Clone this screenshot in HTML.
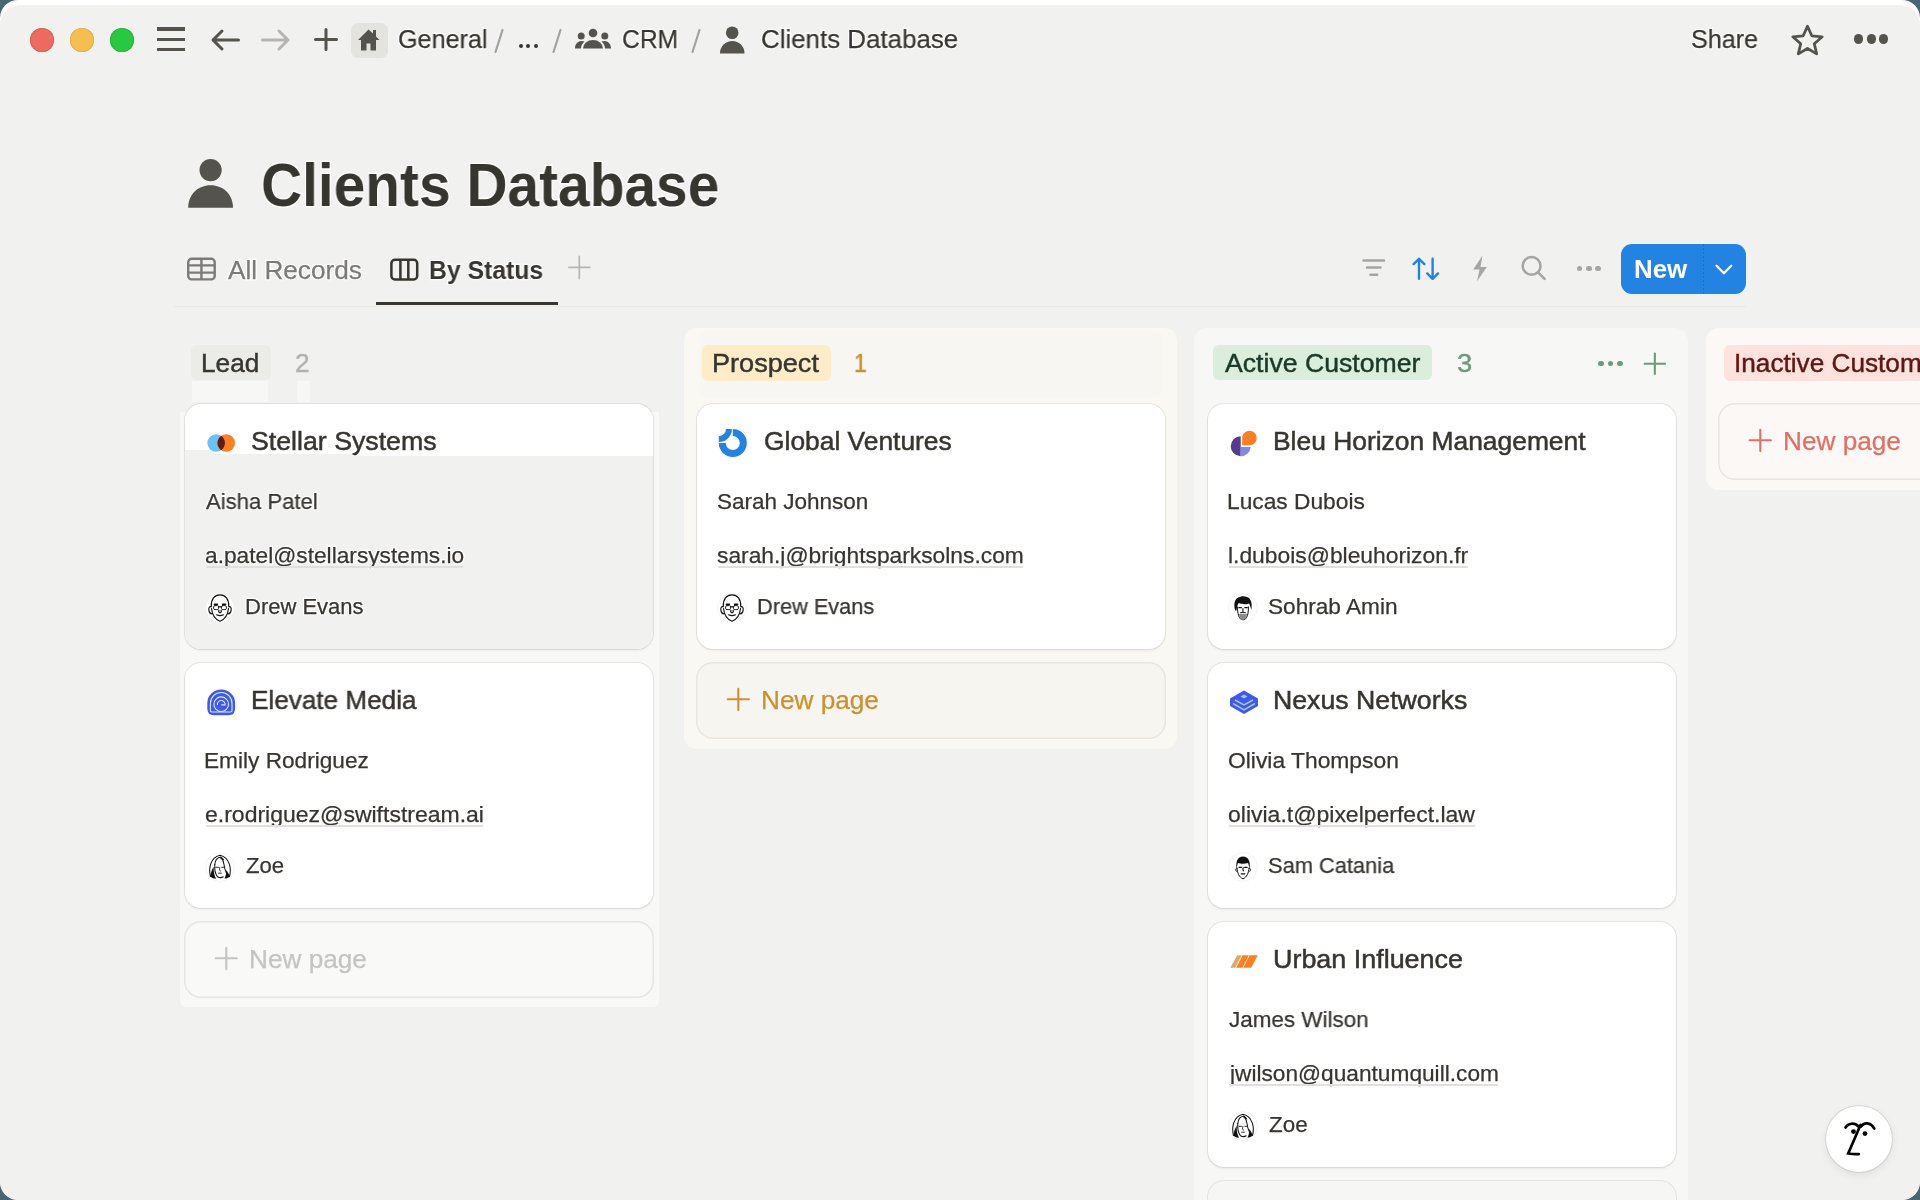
<!DOCTYPE html><html><head><meta charset="utf-8"><style>
html,body{margin:0;padding:0;}
body{width:1920px;height:1200px;position:relative;overflow:hidden;background:#4b6670;font-family:"Liberation Sans",sans-serif;}
.t{position:absolute;white-space:nowrap;line-height:1;transform-origin:0 0;will-change:transform;}
.r{position:absolute;}
</style></head><body>
<div class="r" style="left:0px;top:0px;width:1920px;height:1200px;background:#ffffff;border-radius:18px;"></div>
<div class="r" style="left:0px;top:5px;width:1920px;height:1195px;background:#f1f1ef;border-radius:20px 20px 20px 20px;"></div>
<div class="r" style="left:30px;top:28px;width:24px;height:24px;background:#ed6a5e;border-radius:50%;box-shadow:inset 0 0 0 0.6px #d0574b;"></div>
<div class="r" style="left:70px;top:28px;width:24px;height:24px;background:#f5bf4f;border-radius:50%;box-shadow:inset 0 0 0 0.6px #d8a13a;"></div>
<div class="r" style="left:110px;top:28px;width:24px;height:24px;background:#28c840;border-radius:50%;box-shadow:inset 0 0 0 0.6px #1fa934;"></div>
<div class="r" style="left:157px;top:27.4px;width:28px;height:3.2px;background:#55534e;"></div>
<div class="r" style="left:157px;top:37.8px;width:28px;height:3.2px;background:#55534e;"></div>
<div class="r" style="left:157px;top:47.9px;width:28px;height:3.2px;background:#55534e;"></div>
<svg class="r" style="left:208px;top:26px" width="34" height="28" viewBox="0 0 34 28"><path d="M30.5 14H5.5M14 5L5 14l9 9" fill="none" stroke="#55534e" stroke-width="3" stroke-linecap="round" stroke-linejoin="round"/></svg>
<svg class="r" style="left:259px;top:26px" width="34" height="28" viewBox="0 0 34 28"><path d="M3.5 14H28.5M20 5l9 9-9 9" fill="none" stroke="#b5b4b0" stroke-width="3" stroke-linecap="round" stroke-linejoin="round"/></svg>
<svg class="r" style="left:311px;top:25px" width="30" height="30" viewBox="0 0 30 30"><path d="M15 4.5V24.5M4.5 14.5H25.5" fill="none" stroke="#55534e" stroke-width="3" stroke-linecap="round"/></svg>
<div class="r" style="left:351px;top:22.5px;width:36.5px;height:35.5px;background:#e3e3e0;border-radius:7px;"></div>
<svg class="r" style="left:357px;top:28px" width="24" height="24" viewBox="0 0 24 24"><path d="M11.5 1.5L1 12h3v10.5h5.5v-7h4v7H19V12h3.5L19 8.5V2h-3v3.5z" fill="#55534e"/></svg>
<div class="t" style="left:397.94px;top:26.30px;font-size:26.20px;color:#fff;transform:scaleX(0.9615);-webkit-text-stroke:2.6px #fff;">General</div>
<div class="t" style="left:397.94px;top:26.30px;font-size:26.20px;color:#37352f;transform:scaleX(0.9615);-webkit-text-stroke:0.25px #37352f;">General</div>
<svg class="r" style="left:493px;top:28px" width="12" height="26" viewBox="0 0 12 26"><path d="M9.5 2L2.5 24" stroke="#a3a29e" stroke-width="2.2" stroke-linecap="round"/></svg>
<div class="r" style="left:518.5px;top:44.1px;width:4.2px;height:4.2px;background:#37352f;border-radius:50%;"></div>
<div class="r" style="left:526.1px;top:44.1px;width:4.2px;height:4.2px;background:#37352f;border-radius:50%;"></div>
<div class="r" style="left:533.5px;top:44.1px;width:4.2px;height:4.2px;background:#37352f;border-radius:50%;"></div>
<svg class="r" style="left:551px;top:28px" width="12" height="26" viewBox="0 0 12 26"><path d="M9.5 2L2.5 24" stroke="#a3a29e" stroke-width="2.2" stroke-linecap="round"/></svg>
<svg class="r" style="left:574px;top:28px" width="38" height="22" viewBox="0 0 38 22"><g fill="#55534e"><circle cx="19" cy="5" r="4.3"/><circle cx="7.2" cy="8" r="3.5"/><circle cx="30.8" cy="8" r="3.5"/><path d="M9 20.5a10 8.5 0 0 1 20 0z"/><path d="M1 20.5c0-4 2-7 6.5-7.5 1.3 0 2.3.2 3 .6-2 1.8-3.3 4-3.6 6.9z"/><path d="M37 20.5c0-4-2-7-6.5-7.5-1.3 0-2.3.2-3 .6 2 1.8 3.3 4 3.6 6.9z"/></g></svg>
<div class="t" style="left:621.66px;top:26.30px;font-size:26.20px;color:#fff;transform:scaleX(0.9412);-webkit-text-stroke:2.6px #fff;">CRM</div>
<div class="t" style="left:621.66px;top:26.30px;font-size:26.20px;color:#37352f;transform:scaleX(0.9412);-webkit-text-stroke:0.25px #37352f;">CRM</div>
<svg class="r" style="left:690px;top:28px" width="12" height="26" viewBox="0 0 12 26"><path d="M9.5 2L2.5 24" stroke="#a3a29e" stroke-width="2.2" stroke-linecap="round"/></svg>
<svg class="r" style="left:719px;top:25px" width="27" height="30" viewBox="0 0 27 30"><g fill="#55534e"><circle cx="13.2" cy="7.7" r="6.3"/><path d="M1 28.5a12.2 12.5 0 0 1 24.5 0z"/></g></svg>
<div class="t" style="left:760.61px;top:26.30px;font-size:26.20px;color:#fff;transform:scaleX(0.9888);-webkit-text-stroke:2.6px #fff;">Clients Database</div>
<div class="t" style="left:760.61px;top:26.30px;font-size:26.20px;color:#37352f;transform:scaleX(0.9888);-webkit-text-stroke:0.25px #37352f;">Clients Database</div>
<div class="t" style="left:1691.04px;top:26.30px;font-size:26.20px;color:#fff;transform:scaleX(0.9603);-webkit-text-stroke:2.6px #fff;">Share</div>
<div class="t" style="left:1691.04px;top:26.30px;font-size:26.20px;color:#37352f;transform:scaleX(0.9603);-webkit-text-stroke:0.25px #37352f;">Share</div>
<svg class="r" style="left:1789px;top:22px" width="37" height="36" viewBox="0 0 37 36"><path d="M18.5 4.2l4.3 9.6 10.4 1-7.9 6.9 2.4 10.2-9.2-5.4-9.2 5.4 2.4-10.2-7.9-6.9 10.4-1z" fill="none" stroke="#55534e" stroke-width="2.8" stroke-linejoin="round"/></svg>
<div class="r" style="left:1854.2px;top:34.4px;width:9.2px;height:9.2px;background:#55534e;border-radius:50%;"></div>
<div class="r" style="left:1866.5px;top:34.4px;width:9.2px;height:9.2px;background:#55534e;border-radius:50%;"></div>
<div class="r" style="left:1879.0px;top:34.4px;width:9.2px;height:9.2px;background:#55534e;border-radius:50%;"></div>
<svg class="r" style="left:184px;top:155px" width="52" height="56" viewBox="0 0 52 56"><g fill="#55534e"><circle cx="26.6" cy="15.1" r="11.1"/><path d="M4.2 52.8C4.2 39.5 14 30.3 26.6 30.3S49 39.5 49 52.8z"/></g></svg>
<div class="t" style="left:261.16px;top:154.00px;font-size:61.80px;color:#fff;font-weight:700;transform:scaleX(0.9202);-webkit-text-stroke:2.6px #fff;">Clients Database</div>
<div class="t" style="left:261.16px;top:154.00px;font-size:61.80px;color:#37352f;font-weight:700;transform:scaleX(0.9202);">Clients Database</div>
<svg class="r" style="left:186px;top:257px" width="31" height="25" viewBox="0 0 31 25"><g fill="none" stroke="#7d7b77" stroke-width="2.4"><rect x="2.2" y="1.8" width="26.5" height="20.6" rx="3.5"/><path d="M15.4 2v20.4M2.2 8.4h26.5M2.2 15.6h26.5"/></g></svg>
<div class="t" style="left:227.70px;top:257.30px;font-size:26.20px;color:#fff;-webkit-text-stroke:2.6px #fff;">All Records</div>
<div class="t" style="left:227.70px;top:257.30px;font-size:26.20px;color:#7d7b77;-webkit-text-stroke:0.25px #7d7b77;">All Records</div>
<svg class="r" style="left:389px;top:258px" width="31" height="24" viewBox="0 0 31 24"><g fill="none" stroke="#37352f" stroke-width="2.5"><rect x="2.4" y="1.8" width="25.8" height="19.6" rx="3.5"/><path d="M11.4 2v19.4M19.3 2v19.4"/></g></svg>
<div class="t" style="left:429.11px;top:257.30px;font-size:26.20px;color:#fff;font-weight:700;transform:scaleX(0.9449);-webkit-text-stroke:2.6px #fff;">By Status</div>
<div class="t" style="left:429.11px;top:257.30px;font-size:26.20px;color:#37352f;font-weight:700;transform:scaleX(0.9449);">By Status</div>
<div class="r" style="left:376px;top:302.3px;width:182px;height:2.8px;background:#37352f;"></div>
<svg class="r" style="left:566px;top:254px" width="26" height="27" viewBox="0 0 26 27"><path d="M13.3 2.4v22M2.9 13.4h20.8" stroke="#b7b6b2" stroke-width="1.7" stroke-linecap="round"/></svg>
<div class="r" style="left:174px;top:305.5px;width:1572px;height:1.2px;background:#e9e8e5;"></div>
<svg class="r" style="left:1360px;top:256px" width="28" height="24" viewBox="0 0 28 24"><path d="M3.5 4.5h20.5M7 11.6h13.5M10.4 18.8h6.8" stroke="#a6a5a1" stroke-width="2.5" stroke-linecap="round"/></svg>
<svg class="r" style="left:1410px;top:255px" width="34" height="28" viewBox="0 0 34 28"><g fill="none" stroke="#2383e2" stroke-width="2.4" stroke-linecap="round" stroke-linejoin="round"><path d="M9 23.8V3.8M3.6 9.2L9 3.8l5.4 5.4"/><path d="M22.6 3.8v20M17.2 18.4l5.4 5.4 5.4-5.4"/></g></svg>
<svg class="r" style="left:1470px;top:254px" width="22" height="29" viewBox="0 0 22 29"><path d="M12.5 1.5L3.2 15.4h6.4l-2.6 11.8 9.8-14.3h-6.4z" fill="#a6a5a1"/></svg>
<svg class="r" style="left:1519px;top:253px" width="31" height="31" viewBox="0 0 31 31"><g fill="none" stroke="#a6a5a1" stroke-width="2.6" stroke-linecap="round"><circle cx="12.6" cy="12.9" r="8.9"/><path d="M19.3 19.6l6.3 6.3"/></g></svg>
<div class="r" style="left:1576.8px;top:265.9px;width:5.6px;height:5.6px;background:#a6a5a1;border-radius:50%;"></div>
<div class="r" style="left:1586.0px;top:265.9px;width:5.6px;height:5.6px;background:#a6a5a1;border-radius:50%;"></div>
<div class="r" style="left:1595.2px;top:265.9px;width:5.6px;height:5.6px;background:#a6a5a1;border-radius:50%;"></div>
<div class="r" style="left:1621px;top:244.2px;width:125px;height:49.8px;background:#2383e2;border-radius:11px;"></div>
<div class="r" style="left:1703px;top:244.2px;width:1px;height:49.8px;background:repeating-linear-gradient(#5b4aa8 0 2px,transparent 2px 4px);opacity:.7;"></div>
<div class="t" style="left:1634.34px;top:256.80px;font-size:25.20px;color:#ffffff;font-weight:700;transform:scaleX(1.0280);">New</div>
<svg class="r" style="left:1713px;top:262px" width="22" height="16" viewBox="0 0 22 16"><path d="M3.5 3.8l7.4 7.4 7.4-7.4" fill="none" stroke="#ffffff" stroke-width="2.3" stroke-linecap="round" stroke-linejoin="round"/></svg>
<div class="r" style="left:180px;top:412px;width:478.5px;height:595px;background:#f8f8f7;border-radius:0 0 6px 6px;"></div>
<div class="r" style="left:192px;top:381px;width:76px;height:21px;background:#f7f7f5;"></div>
<div class="r" style="left:297px;top:381px;width:13px;height:21px;background:#f7f7f5;"></div>
<div class="r" style="left:684px;top:328px;width:493px;height:421px;background:#faf8f3;border-radius:13px;"></div>
<div class="r" style="left:700px;top:331px;width:462px;height:66px;background:#f7f6f2;border-radius:8px;"></div>
<div class="r" style="left:1194px;top:328px;width:494px;height:900px;background:#f7f7f5;border-radius:13px;"></div>
<div class="r" style="left:1706px;top:328px;width:230px;height:162px;background:#fcf8f6;border-radius:13px;"></div>
<div class="r" style="left:190.8px;top:345.4px;width:80px;height:35px;background:#ebebe8;border-radius:6px;"></div>
<div class="t" style="left:200.91px;top:350.30px;font-size:26.20px;color:#37352f;transform:scaleX(0.9927);-webkit-text-stroke:0.45px #37352f;">Lead</div>
<div class="t" style="left:295.00px;top:350.30px;font-size:26.20px;color:#b3b2ae;-webkit-text-stroke:0.4px #b3b2ae;">2</div>
<div class="r" style="left:702px;top:345px;width:128.6px;height:35.8px;background:#fdecc8;border-radius:6px;"></div>
<div class="t" style="left:711.93px;top:350.30px;font-size:26.20px;color:#37352f;transform:scaleX(1.0347);-webkit-text-stroke:0.45px #37352f;">Prospect</div>
<div class="t" style="left:853.75px;top:350.30px;font-size:26.20px;color:#cb912f;transform:scaleX(0.8750);-webkit-text-stroke:0.5px #cb912f;">1</div>
<div class="r" style="left:1213.2px;top:345px;width:218.5px;height:35.4px;background:#dbeddb;border-radius:6px;"></div>
<div class="t" style="left:1224.90px;top:350.30px;font-size:26.20px;color:#1c3829;transform:scaleX(1.0167);-webkit-text-stroke:0.45px #1c3829;">Active Customer</div>
<div class="t" style="left:1456.75px;top:350.30px;font-size:26.20px;color:#6c9b7d;transform:scaleX(1.0462);-webkit-text-stroke:0.4px #6c9b7d;">3</div>
<div class="r" style="left:1598.0px;top:360.5px;width:5.8px;height:5.8px;background:#6c9b7d;border-radius:50%;"></div>
<div class="r" style="left:1607.6px;top:360.5px;width:5.8px;height:5.8px;background:#6c9b7d;border-radius:50%;"></div>
<div class="r" style="left:1617.1999999999998px;top:360.5px;width:5.8px;height:5.8px;background:#6c9b7d;border-radius:50%;"></div>
<svg class="r" style="left:1641px;top:350px" width="28" height="28" viewBox="0 0 28 28"><path d="M13.85 3.5V23.9M3.65 13.7H24.05" stroke="#6c9b7d" stroke-width="2.1" stroke-linecap="round"/></svg>
<div class="r" style="left:1724.2px;top:345px;width:220px;height:35.8px;background:#ffe2dd;border-radius:6px;"></div>
<div class="t" style="left:1733.80px;top:350.30px;font-size:26.20px;color:#5d1715;-webkit-text-stroke:0.45px #5d1715;">Inactive Customer</div>
<div class="r" style="left:185px;top:404px;width:468px;height:245px;background:#fff;border-radius:16px;box-shadow:0 0 0 1px rgba(15,15,15,0.08),0 2px 3px rgba(15,15,15,0.05);"></div>
<div class="r" style="left:185px;top:450px;width:468px;height:199px;background:#f1f1ef;border-radius:0 0 16px 16px;"></div>
<div class="r" style="left:214px;top:450px;width:439px;height:4px;background:#fff;"></div>
<div class="r" style="left:352px;top:454px;width:301px;height:2px;background:#fff;"></div>
<svg class="r" style="left:206px;top:428px" width="30" height="30" viewBox="0 0 30 30"><circle cx="10.2" cy="15" r="8.8" fill="#6ac3f8"/><circle cx="20.2" cy="15" r="8.8" fill="#fd7f1f"/><path d="M15.2 7.8a8.8 8.8 0 0 1 0 14.4a8.8 8.8 0 0 1 0-14.4z" fill="#651a15"/></svg>
<div class="t" style="left:251.48px;top:428.25px;font-size:26.30px;color:#37352f;transform:scaleX(1.0160);-webkit-text-stroke:0.5px #37352f;">Stellar Systems</div>
<div class="t" style="left:205.80px;top:490.65px;font-size:22.50px;color:#fff;transform:scaleX(0.9823);-webkit-text-stroke:2.6px #fff;">Aisha Patel</div>
<div class="t" style="left:205.80px;top:490.65px;font-size:22.50px;color:#37352f;transform:scaleX(0.9823);-webkit-text-stroke:0.25px #37352f;">Aisha Patel</div>
<div class="t" style="left:204.79px;top:544.65px;font-size:22.50px;color:#fff;transform:scaleX(1.0098);-webkit-text-stroke:2.6px #fff;">a.patel@stellarsystems.io</div>
<div class="t" style="left:204.79px;top:544.65px;font-size:22.50px;color:#37352f;transform:scaleX(1.0098);-webkit-text-stroke:0.25px #37352f;">a.patel@stellarsystems.io</div>
<div class="r" style="left:205.5px;top:566px;width:257.8px;height:1.5px;background:#e1e0dd;"></div>
<svg class="r" style="left:204.5px;top:592.6px" width="30" height="30" viewBox="0 0 30 30"><circle cx="15" cy="15" r="14.4" fill="#fff" stroke="#ececea" stroke-width="0.7"/><g fill="none" stroke="#111" stroke-width="1.15" stroke-linecap="round"><path d="M6.3 13.2C6 6.3 9.6 1.9 15 1.9s9 4.4 8.7 11.3"/><path d="M6.5 15.5C7.2 21.5 10 26.5 15 28.2c5-1.7 7.8-6.7 8.5-12.7"/><path d="M6.2 13.8c-1.8-.6-2.8 1.2-2.3 3.6.4 2 1.5 3.6 3.2 3.4M23.8 13.8c1.8-.6 2.8 1.2 2.3 3.6-.4 2-1.5 3.6-3.2 3.4"/><rect x="8.6" y="12.6" width="5" height="4" rx="1.4" stroke-width=".9"/><rect x="16.4" y="12.6" width="5" height="4" rx="1.4" stroke-width=".9"/><path d="M13.6 13.8h2.8M13.9 17.2c-.5 1.4.1 2.6 1.1 2.6s1.6-1.2 1.1-2.6M11.6 21.8c2.2 1.1 4.6 1.1 6.8 0"/><path d="M9.3 11.2h3.2M17.5 11.2h3.2" stroke-width="1.4"/></g></svg>
<div class="t" style="left:244.80px;top:595.90px;font-size:22.00px;color:#fff;-webkit-text-stroke:2.6px #fff;">Drew Evans</div>
<div class="t" style="left:244.80px;top:595.90px;font-size:22.00px;color:#37352f;-webkit-text-stroke:0.25px #37352f;">Drew Evans</div>
<div class="r" style="left:185px;top:663px;width:468px;height:245px;background:#fff;border-radius:16px;box-shadow:0 0 0 1px rgba(15,15,15,0.08),0 2px 3px rgba(15,15,15,0.05);"></div>
<svg class="r" style="left:206px;top:687px" width="30" height="30" viewBox="0 0 30 30"><path d="M1.3 16A13.9 13.4 0 0 1 29.1 16V21.5Q29.1 28.2 22.5 28.2H7.9Q1.3 28.2 1.3 21.5Z" fill="#3d5ae8"/><g fill="none" stroke="#dfe6ff" stroke-width="1.1"><path d="M4.4 23.4V16.3A10.8 10.8 0 0 1 26 16.3V23.4Q26 25 24.4 25H6Q4.4 25 4.4 23.4Z"/><circle cx="15.2" cy="17.2" r="7.3"/><path d="M11.4 18.2A3.9 3.9 0 1 1 19.1 17.9H15.2"/></g></svg>
<div class="t" style="left:250.51px;top:687.25px;font-size:26.30px;color:#37352f;transform:scaleX(0.9927);-webkit-text-stroke:0.5px #37352f;">Elevate Media</div>
<div class="t" style="left:203.79px;top:749.65px;font-size:22.50px;color:#37352f;transform:scaleX(1.0062);-webkit-text-stroke:0.25px #37352f;">Emily Rodriguez</div>
<div class="t" style="left:204.78px;top:803.65px;font-size:22.50px;color:#37352f;transform:scaleX(1.0221);-webkit-text-stroke:0.25px #37352f;">e.rodriguez@swiftstream.ai</div>
<div class="r" style="left:205.5px;top:825px;width:277.3px;height:1.5px;background:#e1e0dd;"></div>
<svg class="r" style="left:204.5px;top:851.6px" width="30" height="30" viewBox="0 0 30 30"><circle cx="15" cy="15" r="14.4" fill="#fff" stroke="#ececea" stroke-width="0.7"/><g fill="none" stroke="#111" stroke-width="1.05" stroke-linecap="round"><path d="M5.5 24.5C3.5 17 5 5.5 15 3.2c10 2.3 11.5 13.8 9.5 21.3"/><path d="M9.8 12.5c.3-4 2.5-6.8 5.8-7.5 1.8 1.5 2.8 4 3.3 7 .6 4 1.8 8.5 4 11.5"/><path d="M9.8 12.5c-.4 4.5.3 9 2.6 12.2M13 25c1.6 .8 3.6 .8 5.2-.2"/><path d="M10.8 15.3h2.6M16.8 15.3h2.4M14.8 15.5c-.3 1.8-.6 3.2.6 3.6M13.6 21.2h2.8" stroke-width=".9"/></g><path d="M5.5 24.5c1.5 1.5 3.5 2.3 5.5 2.2-1.8-3.3-2.6-7.5-2.2-12-1.8 2.5-3.2 6-3.3 9.8z" fill="#111"/><path d="M24.5 24.5c-1.5 1.5-3.3 2.2-5 2 1.5-2.5 1.8-5.5 1.6-8.5 1.6 1.8 3 4 3.4 6.5z" fill="#111"/><path d="M15.6 5c1.8.3 3.2 1.6 3.8 3.5-1.3-.8-2.6-1.4-3.8-1.6z" fill="#111"/></svg>
<div class="t" style="left:245.80px;top:854.90px;font-size:22.00px;color:#37352f;transform:scaleX(1.0054);-webkit-text-stroke:0.25px #37352f;">Zoe</div>
<div class="r" style="left:697px;top:404px;width:468px;height:245px;background:#fff;border-radius:16px;box-shadow:0 0 0 1px rgba(15,15,15,0.08),0 2px 3px rgba(15,15,15,0.05);"></div>
<svg class="r" style="left:718px;top:428px" width="30" height="30" viewBox="0 0 30 30"><path d="M14.8 1A14 14 0 1 1 0.8 15H7.8A7 7 0 1 0 14.8 8Z" fill="#2383e2"/><path d="M8 1H13.9A13.1 13.1 0 0 1 0.8 14.1V8.2A7.2 7.2 0 0 0 8 1Z" fill="#2383e2"/></svg>
<div class="t" style="left:763.50px;top:428.25px;font-size:26.30px;color:#37352f;transform:scaleX(1.0032);-webkit-text-stroke:0.5px #37352f;">Global Ventures</div>
<div class="t" style="left:716.80px;top:490.65px;font-size:22.50px;color:#37352f;transform:scaleX(0.9980);-webkit-text-stroke:0.25px #37352f;">Sarah Johnson</div>
<div class="t" style="left:716.79px;top:544.65px;font-size:22.50px;color:#37352f;transform:scaleX(1.0126);-webkit-text-stroke:0.25px #37352f;">sarah.j@brightsparksolns.com</div>
<div class="r" style="left:717.5px;top:566px;width:305.1px;height:1.5px;background:#e1e0dd;"></div>
<svg class="r" style="left:716.5px;top:592.6px" width="30" height="30" viewBox="0 0 30 30"><circle cx="15" cy="15" r="14.4" fill="#fff" stroke="#ececea" stroke-width="0.7"/><g fill="none" stroke="#111" stroke-width="1.15" stroke-linecap="round"><path d="M6.3 13.2C6 6.3 9.6 1.9 15 1.9s9 4.4 8.7 11.3"/><path d="M6.5 15.5C7.2 21.5 10 26.5 15 28.2c5-1.7 7.8-6.7 8.5-12.7"/><path d="M6.2 13.8c-1.8-.6-2.8 1.2-2.3 3.6.4 2 1.5 3.6 3.2 3.4M23.8 13.8c1.8-.6 2.8 1.2 2.3 3.6-.4 2-1.5 3.6-3.2 3.4"/><rect x="8.6" y="12.6" width="5" height="4" rx="1.4" stroke-width=".9"/><rect x="16.4" y="12.6" width="5" height="4" rx="1.4" stroke-width=".9"/><path d="M13.6 13.8h2.8M13.9 17.2c-.5 1.4.1 2.6 1.1 2.6s1.6-1.2 1.1-2.6M11.6 21.8c2.2 1.1 4.6 1.1 6.8 0"/><path d="M9.3 11.2h3.2M17.5 11.2h3.2" stroke-width="1.4"/></g></svg>
<div class="t" style="left:756.81px;top:595.90px;font-size:22.00px;color:#37352f;transform:scaleX(0.9889);-webkit-text-stroke:0.25px #37352f;">Drew Evans</div>
<div class="r" style="left:1208px;top:404px;width:468px;height:245px;background:#fff;border-radius:16px;box-shadow:0 0 0 1px rgba(15,15,15,0.08),0 2px 3px rgba(15,15,15,0.05);"></div>
<svg class="r" style="left:1229px;top:428px" width="30" height="30" viewBox="0 0 30 30"><path d="M13.2 17.3V9.3A7.3 7.3 0 1 1 20.5 17.3Z" fill="#fd7f1f"/><path d="M11.7 8.3A10 10 0 0 0 11.7 28.3Z" fill="#553a92"/><path d="M11.7 19H21.7A10 10 0 0 1 11.7 28.3Z" fill="#7f8ae8"/></svg>
<div class="t" style="left:1273.49px;top:428.25px;font-size:26.30px;color:#37352f;transform:scaleX(1.0039);-webkit-text-stroke:0.5px #37352f;">Bleu Horizon Management</div>
<div class="t" style="left:1226.78px;top:490.65px;font-size:22.50px;color:#37352f;transform:scaleX(1.0112);-webkit-text-stroke:0.25px #37352f;">Lucas Dubois</div>
<div class="t" style="left:1227.79px;top:544.65px;font-size:22.50px;color:#37352f;transform:scaleX(1.0148);-webkit-text-stroke:0.25px #37352f;">l.dubois@bleuhorizon.fr</div>
<div class="r" style="left:1228.5px;top:566px;width:239.79999999999995px;height:1.5px;background:#e1e0dd;"></div>
<svg class="r" style="left:1227.5px;top:592.6px" width="30" height="30" viewBox="0 0 30 30"><circle cx="15" cy="15" r="14.4" fill="#fff" stroke="#ececea" stroke-width="0.7"/><path d="M7.2 17.5C5.5 12 6 4.8 12.5 3.8c2-.8 4.5-.6 6.5.3 4.5 1.8 5.3 6.5 4.3 12.8-.6-2.2-1-4.6-2.2-6.5-2.6 1.2-7.2 1.2-10.4-.3-1.3 2-1.8 4.5-2.2 7.4z" fill="#111"/><g fill="none" stroke="#111" stroke-width="1" stroke-linecap="round"><path d="M9.6 14c-.2 4.6.6 8.5 2 10.8 1.5 2.6 5.3 2.6 6.8 0 1.4-2.3 2.2-6.2 2-10.8"/><path d="M10.8 14.6h2.6M16.8 14.6h2.6M14.9 15.5v3.5M12.6 19.8c1.5-.7 3.3-.7 4.8 0" stroke-width="1.1"/></g><path d="M11 20.8c1.2 .6 2.5-.3 4 0s2.8.6 4-.2c-.2 3-1.5 6-4 6.3s-3.8-3.1-4-6.1z" fill="#8a8a8a"/></svg>
<div class="t" style="left:1267.77px;top:595.90px;font-size:22.00px;color:#37352f;transform:scaleX(1.0282);-webkit-text-stroke:0.25px #37352f;">Sohrab Amin</div>
<div class="r" style="left:1208px;top:663px;width:468px;height:245px;background:#fff;border-radius:16px;box-shadow:0 0 0 1px rgba(15,15,15,0.08),0 2px 3px rgba(15,15,15,0.05);"></div>
<svg class="r" style="left:1229px;top:687px" width="30" height="30" viewBox="0 0 30 30"><path d="M15 3.5l14 8v7.5l-14 8-14-8v-7.5z" fill="#3d5ae8"/><path d="M6 13l9 5 9-5M4 16.5l11 6.3 11-6.3" fill="none" stroke="#a7c1f5" stroke-width="1.5"/><path d="M15 7.5l3.5 2-3.5 2-3.5-2z" fill="#a7c1f5"/></svg>
<div class="t" style="left:1273.47px;top:687.25px;font-size:26.30px;color:#37352f;transform:scaleX(1.0148);-webkit-text-stroke:0.5px #37352f;">Nexus Networks</div>
<div class="t" style="left:1227.79px;top:749.65px;font-size:22.50px;color:#37352f;transform:scaleX(1.0145);-webkit-text-stroke:0.25px #37352f;">Olivia Thompson</div>
<div class="t" style="left:1227.78px;top:803.65px;font-size:22.50px;color:#37352f;transform:scaleX(1.0216);-webkit-text-stroke:0.25px #37352f;">olivia.t@pixelperfect.law</div>
<div class="r" style="left:1228.5px;top:825px;width:246.5px;height:1.5px;background:#e1e0dd;"></div>
<svg class="r" style="left:1227.5px;top:851.6px" width="30" height="30" viewBox="0 0 30 30"><circle cx="15" cy="15" r="14.4" fill="#fff" stroke="#ececea" stroke-width="0.7"/><path d="M8.6 17C7.5 9.5 9.6 4.6 15 4.6s7.7 4.9 6.6 12.4c-.6-2.6-1-4.8-1.6-5.9-2.8.9-7.4.9-10 0-.6 1.1-1 3.3-1.4 5.9z" fill="#111"/><g fill="none" stroke="#111" stroke-width="1" stroke-linecap="round"><path d="M9 16c.3 5 2.2 9.2 6 10.9 3.8-1.7 5.7-5.9 6-10.9"/><path d="M9 16.2c-1.4-.4-1.8 1.8-.6 3.2M21.2 16.2c1.4-.4 1.8 1.8.6 3.2"/><path d="M11 15.3h2.6M16.6 15.3h2.6M15.2 15.6c-.4 1.5-.6 2.6.2 3.2M13.2 21.8h3.6" stroke-width="1.15"/></g></svg>
<div class="t" style="left:1267.81px;top:854.90px;font-size:22.00px;color:#37352f;transform:scaleX(0.9929);-webkit-text-stroke:0.25px #37352f;">Sam Catania</div>
<div class="r" style="left:1208px;top:922px;width:468px;height:245px;background:#fff;border-radius:16px;box-shadow:0 0 0 1px rgba(15,15,15,0.08),0 2px 3px rgba(15,15,15,0.05);"></div>
<svg class="r" style="left:1229px;top:946px" width="30" height="30" viewBox="0 0 30 30"><path d="M8.3 9.2H12.6L6.2 21.7H1.3Z" fill="#e0a963"/><path d="M13.5 9.2H19.8L13.4 21.7H7.2Z" fill="#fd7f1f"/><path d="M20.6 9.2H28.8L22.2 21.7H14.2Z" fill="#fd7f1f"/></svg>
<div class="t" style="left:1273.45px;top:946.25px;font-size:26.30px;color:#37352f;transform:scaleX(1.0230);-webkit-text-stroke:0.5px #37352f;">Urban Influence</div>
<div class="t" style="left:1228.80px;top:1008.65px;font-size:22.50px;color:#37352f;transform:scaleX(0.9971);-webkit-text-stroke:0.25px #37352f;">James Wilson</div>
<div class="t" style="left:1229.81px;top:1062.65px;font-size:22.50px;color:#37352f;transform:scaleX(1.0082);-webkit-text-stroke:0.25px #37352f;">jwilson@quantumquill.com</div>
<div class="r" style="left:1228.5px;top:1084px;width:269.5px;height:1.5px;background:#e1e0dd;"></div>
<svg class="r" style="left:1227.5px;top:1110.6px" width="30" height="30" viewBox="0 0 30 30"><circle cx="15" cy="15" r="14.4" fill="#fff" stroke="#ececea" stroke-width="0.7"/><g fill="none" stroke="#111" stroke-width="1.05" stroke-linecap="round"><path d="M5.5 24.5C3.5 17 5 5.5 15 3.2c10 2.3 11.5 13.8 9.5 21.3"/><path d="M9.8 12.5c.3-4 2.5-6.8 5.8-7.5 1.8 1.5 2.8 4 3.3 7 .6 4 1.8 8.5 4 11.5"/><path d="M9.8 12.5c-.4 4.5.3 9 2.6 12.2M13 25c1.6 .8 3.6 .8 5.2-.2"/><path d="M10.8 15.3h2.6M16.8 15.3h2.4M14.8 15.5c-.3 1.8-.6 3.2.6 3.6M13.6 21.2h2.8" stroke-width=".9"/></g><path d="M5.5 24.5c1.5 1.5 3.5 2.3 5.5 2.2-1.8-3.3-2.6-7.5-2.2-12-1.8 2.5-3.2 6-3.3 9.8z" fill="#111"/><path d="M24.5 24.5c-1.5 1.5-3.3 2.2-5 2 1.5-2.5 1.8-5.5 1.6-8.5 1.6 1.8 3 4 3.4 6.5z" fill="#111"/><path d="M15.6 5c1.8.3 3.2 1.6 3.8 3.5-1.3-.8-2.6-1.4-3.8-1.6z" fill="#111"/></svg>
<div class="t" style="left:1268.80px;top:1113.90px;font-size:22.00px;color:#37352f;transform:scaleX(1.0189);-webkit-text-stroke:0.25px #37352f;">Zoe</div>
<div class="r" style="left:1208px;top:1181px;width:468px;height:60px;background:#f6f6f4;border-radius:16px;box-shadow:0 0 0 1px rgba(15,15,15,0.08);"></div>
<div class="r" style="left:184px;top:921px;width:470px;height:77px;background:#f9f9f8;border-radius:17px;box-shadow:inset 0 0 0 1.5px #e5e5e3;"></div>
<svg class="r" style="left:214px;top:946px" width="26" height="26" viewBox="0 0 26 26"><path d="M12.3 1.7V23.1M1.7 12.3H22.9" stroke="#c4c4c1" stroke-width="2.1" stroke-linecap="round"/></svg>
<div class="t" style="left:249.01px;top:946.30px;font-size:26.20px;color:#c4c4c1;transform:scaleX(0.9965);-webkit-text-stroke:0.25px #c4c4c1;">New page</div>
<div class="r" style="left:696px;top:662px;width:470px;height:77px;background:#f7f5f0;border-radius:17px;box-shadow:inset 0 0 0 1.5px #e9e6df;"></div>
<svg class="r" style="left:726px;top:687px" width="26" height="26" viewBox="0 0 26 26"><path d="M12.3 1.7V23.1M1.7 12.3H22.9" stroke="#cb912f" stroke-width="2.1" stroke-linecap="round"/></svg>
<div class="t" style="left:761.01px;top:687.30px;font-size:26.20px;color:#cb912f;transform:scaleX(0.9965);-webkit-text-stroke:0.25px #cb912f;">New page</div>
<div class="r" style="left:1718px;top:403px;width:260px;height:77px;background:#fcf8f6;border-radius:17px;box-shadow:inset 0 0 0 1.5px #e6e6e3;"></div>
<svg class="r" style="left:1748px;top:428px" width="26" height="26" viewBox="0 0 26 26"><path d="M12.3 1.7V23.1M1.7 12.3H22.9" stroke="#e16f64" stroke-width="2.1" stroke-linecap="round"/></svg>
<div class="t" style="left:1783.01px;top:428.30px;font-size:26.20px;color:#e16f64;transform:scaleX(0.9965);-webkit-text-stroke:0.25px #e16f64;">New page</div>
<div class="r" style="left:1825.5px;top:1105.5px;width:66px;height:66px;border-radius:50%;background:#fff;box-shadow:0 0 0 1px rgba(15,15,15,0.1),0 3px 8px rgba(15,15,15,0.08);"></div>
<svg class="r" style="left:1840px;top:1116px" width="40" height="44" viewBox="0 0 40 44"><g fill="none" stroke="#000" stroke-width="2.7" stroke-linecap="round"><path d="M5.5 11.5c2.5-4.5 9-5.2 13 -1M21 10.5c3-4.5 9.5-4.5 13.3 2"/><path d="M20.5 9L8.2 37.5c3.5.6 7 .8 10.6.6"/></g><circle cx="13.5" cy="15.6" r="2.4" fill="#000"/><circle cx="25" cy="17.6" r="2.4" fill="#000"/></svg>
</body></html>
